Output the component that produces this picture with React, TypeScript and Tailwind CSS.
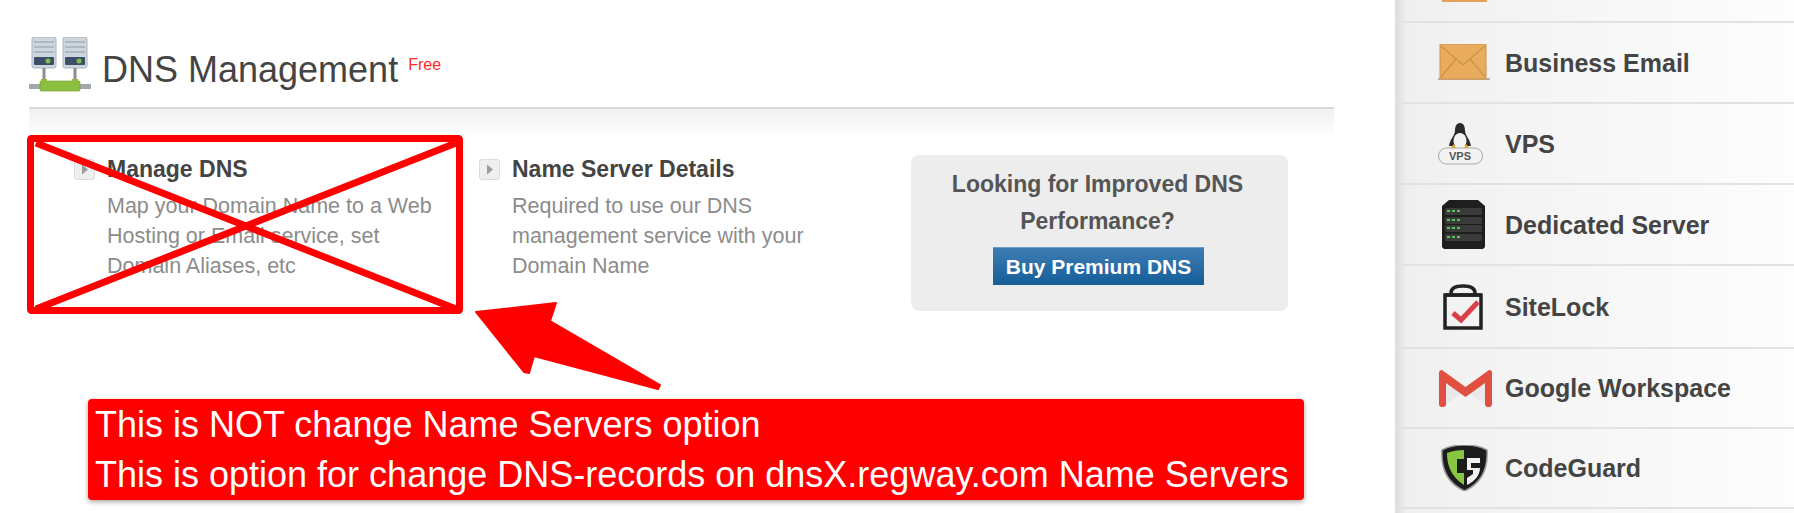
import React from "react";

const sans = "font-['Liberation_Sans',Arial,sans-serif]";

function DnsIcon() {
  const box = (x: number) => (
    <g key={x} transform={`translate(${x} 0)`}>
      <rect x="0" y="0" width="24" height="31" rx="2" fill="#cdd6dc" stroke="#a9b4ba" />
      <path d="M2 5h20M2 10h20M2 15h20" stroke="#8f9aa2" strokeWidth="1" />
      <rect x="2" y="20" width="20" height="8" rx="1" fill="#3d4f68" />
      <circle cx="16" cy="24" r="2.5" fill="#7cc04a" />
      <rect x="10.5" y="31" width="3" height="13" fill="#8b8f92" />
      <rect x="9" y="42" width="6" height="6" fill="#8dbc3f" />
    </g>
  );
  return (
    <svg width="62" height="56" viewBox="0 0 62 56" className="shrink-0">
      <rect x="0" y="47" width="62" height="5" fill="#a3a6a8" />
      <rect x="11" y="44" width="40" height="10" rx="1" fill="#8cc03f" stroke="#6f9c2e" strokeWidth="0.6" />
      {box(3)}
      {box(34)}
    </svg>
  );
}

function ArrowBtn() {
  return (
    <span className="w-[21px] h-[21px] shrink-0 rounded-[3px] border border-[#dcdcdc] bg-[#efefef] flex items-center justify-center mt-[1px]">
      <svg width="8" height="11" viewBox="0 0 8 11">
        <path d="M1 0.5 7 5.5 1 10.5Z" fill="#9b9b9b" />
      </svg>
    </span>
  );
}

function Envelope() {
  return (
    <svg width="52" height="38" viewBox="0 0 52 38">
      <rect x="0" y="34" width="52" height="2" fill="#b9b0a2" />
      <rect x="2" y="0" width="46" height="35" fill="#e9ac5e" stroke="#cf9144" />
      <path d="M3 2 25 21 47 2M3 33 18 15M47 33 32 15" fill="none" stroke="#cf9144" strokeWidth="1.2" />
    </svg>
  );
}

function Penguin() {
  return (
    <svg width="46" height="42" viewBox="0 0 46 42">
      <path d="M22 0c4 0 5 4 5 8 0 4 5 8 6 15H11c1-7 6-11 6-15 0-4 1-8 5-8Z" fill="#2b2b2b" />
      <ellipse cx="22" cy="18" rx="6.5" ry="8" fill="#f4f4f4" />
      <path d="M11 27l5-6 3 6ZM33 27l-5-6-3 6Z" fill="#f0a81e" />
      <rect x="0.5" y="25" width="44" height="16" rx="8" fill="#f3f3f3" stroke="#a9a9a9" />
      <text x="22" y="37" textAnchor="middle" fontSize="11" fontWeight="700" fill="#555" fontFamily="Liberation Sans">VPS</text>
    </svg>
  );
}

function ServerIcon() {
  return (
    <svg width="43" height="49" viewBox="0 0 43 49" className="ml-[4px]">
      <path d="M7 0h29l7 6v41l-2 2H2l-2-2V6Z" fill="#1e1e1e" />
      {[11, 20, 28, 37].map((y) => (
        <g key={y}>
          <rect x="3" y={y - 3} width="37" height="7" rx="1" fill="#3a3a3a" />
          <path d={`M5 ${y}h3M10 ${y}h3M15 ${y}h3`} stroke="#5dc05a" strokeWidth="2" />
        </g>
      ))}
    </svg>
  );
}

function LockIcon() {
  return (
    <svg width="40" height="46" viewBox="0 0 40 46" className="ml-[5px]">
      <path d="M8 11V9c0-5 5-7 12-7s12 2 12 7v2" fill="none" stroke="#222" strokeWidth="3.5" />
      <path d="M2 11h36v33H2Z" fill="none" stroke="#222" strokeWidth="3.5" />
      <path d="M2 11h36" stroke="#222" strokeWidth="3.5" />
      <path d="M10 29l8 7L35 18" fill="none" stroke="#d9404a" strokeWidth="5" />
    </svg>
  );
}

function GmailIcon() {
  return (
    <svg width="53" height="37" viewBox="0 0 53 37" className="ml-[1px]">
      <path d="M4 6 26.500 23 49 6v31H4Z" fill="#e9e9e9" />
      <path d="M4 37 26.500 20 49 37Z" fill="#f3f3f3" />
      <path d="M0 3q0-3 3-3 L26.500 17 50 0q3 0 3 3v31q0 3-3 3h-1q-3 0-3-3V13L26.500 27 7 13v21q0 3-3 3H3q-3 0-3-3Z" fill="#e14f41" />
    </svg>
  );
}

function ShieldIcon() {
  return (
    <svg width="47" height="46" viewBox="0 0 47 46" className="ml-[3px]">
      <path d="M23.500 0C32 0 41 2 46 5c1 16-3 32-22.500 41C4 37 0 21 1 5 6 2 15 0 23.500 0Z" fill="#1c1c1c" stroke="#9a9a9a" strokeWidth="1.500" />
      <path d="M23 5C17 5 11 6 6 8c0 11 3 23 17 32V28h-7V14h7Z" fill="#88c540" />
      <path d="M26 13h13v5H30v5h9c0 7-5 13-13 17v-7l6-4v-4h-6Z" fill="#f2f2f2" />
    </svg>
  );
}

const services = [
  { name: "Business Email", h: "h-[81px]", icon: <Envelope /> },
  { name: "VPS", h: "h-[81px]", icon: <Penguin /> },
  { name: "Dedicated Server", h: "h-[81px]", icon: <ServerIcon /> },
  { name: "SiteLock", h: "h-[83px]", icon: <LockIcon /> },
  { name: "Google Workspace", h: "h-[80px]", icon: <GmailIcon /> },
  { name: "CodeGuard", h: "h-[80px]", icon: <ShieldIcon /> },
];

function Option({ title, lines }: { title: string; lines: string[] }) {
  return (
    <div className="flex gap-[12px]">
      <ArrowBtn />
      <div>
        <h3 className="text-[23px] font-bold text-[#444] leading-[24px] -mt-[1px]">{title}</h3>
        <p className="mt-[10px] text-[21.500px] leading-[30px] text-[#8c8c8c]">
          {lines.map((l) => (
            <span key={l} className="block whitespace-nowrap">{l}</span>
          ))}
        </p>
      </div>
    </div>
  );
}

export default function App(): React.ReactElement {
  return (
    <div className={`relative w-[1794px] h-[513px] overflow-hidden bg-white flex ${sans}`}>
      {/* main column */}
      <main className="w-[1395px] shrink-0 pl-[29px] pr-[61px]">
        <div className="h-[107px] pt-[37px] flex items-start">
          <DnsIcon />
          <h1 className="ml-[11px] mt-[11px] text-[36px] leading-[44px] text-[#444] whitespace-nowrap">DNS Management</h1>
          <span className="ml-[10px] mt-[18px] text-[16px] leading-[20px] text-[#ff2a1f]">Free</span>
        </div>
        <div className="h-[30px] border-t-2 border-[#d9d9d9] bg-gradient-to-b from-[#f1f1f1] to-white" />
        <div className="flex pt-[21px]">
          <div className="w-[450px] pl-[45px]">
            <Option title="Manage DNS" lines={["Map your Domain Name to a Web", "Hosting or Email service, set", "Domain Aliases, etc"]} />
          </div>
          <div className="w-[432px]">
            <Option title="Name Server Details" lines={["Required to use our DNS", "management service with your", "Domain Name"]} />
          </div>
          <div className="w-[377px] h-[156px] -mt-[3px] rounded-[8px] bg-[#ededed] flex flex-col items-center pt-[11px]">
            <p className="text-[23px] font-bold leading-[37px] text-[#555] text-center whitespace-nowrap -translate-x-[2px]">
              Looking for Improved DNS
              <br />
              Performance?
            </p>
            <button type="button" className="mt-[7px] -ml-[2px] w-[211px] h-[38px] bg-gradient-to-b from-[#3d7cb3] to-[#135e99] text-white font-bold text-[21px] border-t border-[#6a9cc7]">
              Buy Premium DNS
            </button>
          </div>
        </div>
      </main>

      {/* services sidebar */}
      <aside className="w-[399px] shrink-0 bg-[linear-gradient(90deg,#dcdcdc_0px,#efefef_12px,#f2f2f2_60px,#fdfdfd_100%)]">
        <div className="h-[23px] overflow-hidden border-b-2 border-[#e2e2e2]">
          <div className="ml-[47px] w-[45px] h-[2px] bg-[#e0a257]" />
        </div>
        {services.map((s) => (
          <div key={s.name} className={`${s.h} flex items-center border-b-2 border-[#e2e2e2]`}>
            <div className="w-[110px] pl-[43px] flex items-center shrink-0">{s.icon}</div>
            <span className="mt-[2px] text-[25px] font-bold text-[#444] whitespace-nowrap">{s.name}</span>
          </div>
        ))}
      </aside>

      {/* red annotations drawn over the page */}
      <svg className="absolute left-0 top-0 pointer-events-none" width="1794" height="513" viewBox="0 0 1794 513">
        <rect x="30.500" y="138.500" width="429" height="172" rx="1" fill="none" stroke="#ff0000" strokeWidth="7" strokeLinejoin="round" />
        <path d="M36 143 456 309M456 143 36 309" stroke="#ff0000" strokeWidth="7" fill="none" />
        <path d="M476 312 556 303 550 321 660 385 658 389 534 356 529 373 524 372Z" fill="#ff0000" stroke="#ff0000" strokeWidth="2" strokeLinejoin="round" />
      </svg>
      <div className="absolute left-[88px] top-[399px] w-[1216px] h-[101px] rounded-[4px] bg-[#ff0000] shadow-[0_2px_5px_rgba(0,0,0,0.35)] pl-[7px] pt-[1px] text-white text-[36px] leading-[50px] whitespace-nowrap">
        <div>This is NOT change Name Servers option</div>
        <div>This is option for change DNS-records on dnsX.regway.com Name Servers</div>
      </div>
    </div>
  );
}
